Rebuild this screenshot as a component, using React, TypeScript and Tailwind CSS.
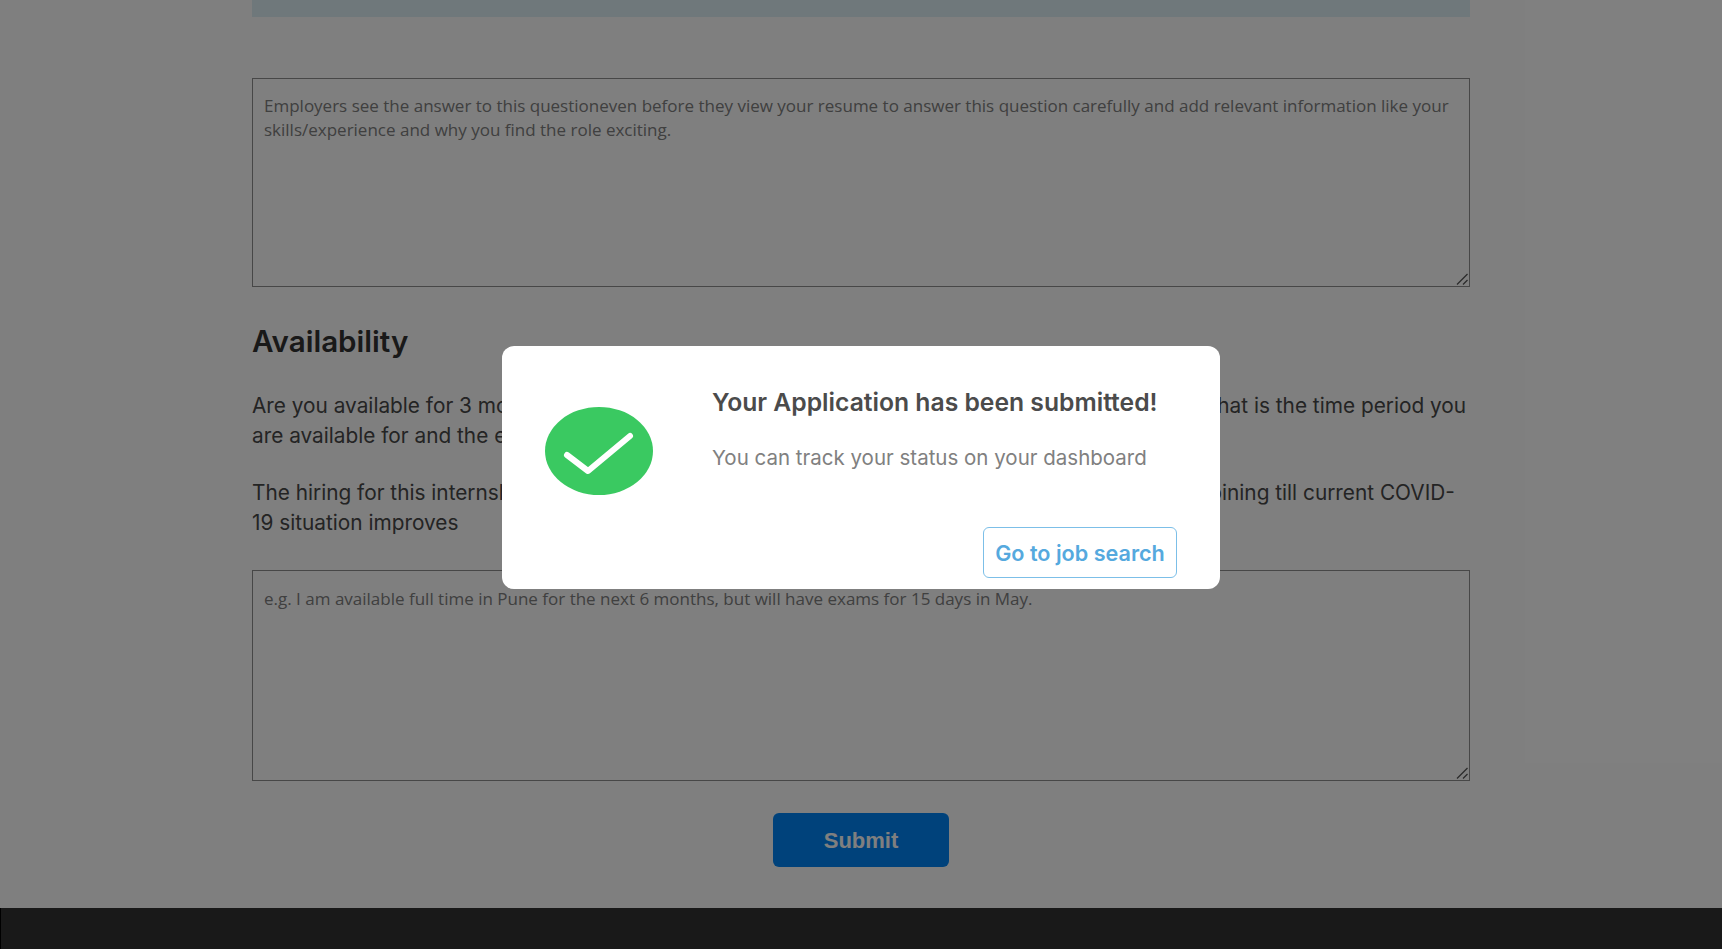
import React from 'react';

const Field: React.FC<{ placeholder: string; small?: boolean }> = ({ placeholder, small }) => (
  <div className={`relative w-full border border-[#8f8f8f] px-[11px] pt-[15px] text-[17px] leading-6 text-[#808080] ${small ? 'mt-[32px] h-[211px] pt-[16px]' : 'h-[209px]'}`} style={{ fontFamily: '"Open Sans", sans-serif' }}>
    {placeholder}
    {/* resize grip */}
    <svg className="absolute right-0 bottom-0" width="14" height="14" viewBox="0 0 14 14" fill="none" stroke="#555" strokeWidth="1.2">
      <path d="M2 12.5 12.5 2" />
      <path d="M8 12.5 12.5 8" />
    </svg>
  </div>
);

export default function App() {
  return (
    <div className="relative h-screen overflow-hidden bg-white flex flex-col font-['Inter',sans-serif] text-[#333]">
      <main className="flex-1 px-[252px]">
        <div className="h-[17px] bg-[#dff1f7] overflow-hidden" />
        <div className="mt-[61px]">
          <Field placeholder="Employers see the answer to this questioneven before they view your resume to answer this question carefully and add relevant information like your skills/experience and why you find the role exciting." />
        </div>

        <h2 className="mt-[34px] text-[29.6px] leading-[40px] font-semibold text-[#333]">Availability</h2>

        <p className="mt-[30px] text-[20.8px] leading-[30px] text-[#484848]">
          Are you available for 3 months, starting immediately, for a full-time internship from home? If not, what is the time period you are available for and the earliest date you can start this internship on?
        </p>
        <p className="mt-[27px] text-[20.8px] leading-[30px] text-[#484848]">
          The hiring for this internship will be done online, and the selected candidates will have a delayed joining till current COVID-19 situation improves
        </p>

        <Field small placeholder="e.g. I am available full time in Pune for the next 6 months, but will have exams for 15 days in May." />

        <div className="mt-[32px] flex justify-center">
          <button className="w-[176px] h-[54px] rounded-[6px] bg-[#0085f7] text-white text-[22px] font-bold font-['Liberation_Sans',sans-serif]">Submit</button>
        </div>
      </main>

      <footer className="h-[41px] bg-[#333] border-l border-black" />

      {/* dim layer with success dialog */}
      <div className="absolute inset-0 bg-black/50 flex justify-center pt-[346px]">
        <div className="w-[718px] h-[243px] bg-white rounded-[12px] flex flex-col pr-[43px]">
          <div className="flex flex-1">
            <div className="w-[210px] pt-[61px] pl-[43px] shrink-0">
              <svg width="108" height="88" viewBox="0 0 108 88">
                <ellipse cx="54" cy="44" rx="54" ry="44" fill="#3ac961" />
                <path d="M22 48 43 64 85 29" fill="none" stroke="#fff" strokeWidth="6" strokeLinecap="round" strokeLinejoin="round" />
              </svg>
            </div>
            <div className="pt-[38px]">
              <h3 className="text-[24.7px] leading-[36px] font-semibold text-[#4b4b4b] whitespace-nowrap">Your Application has been submitted!</h3>
              <p className="mt-[23px] text-[20.5px] leading-[30px] text-[#808080] whitespace-nowrap">You can track your status on your dashboard</p>
            </div>
          </div>
          <div className="flex justify-end pb-[11px]">
            <button className="w-[194px] h-[51px] rounded-[6px] border border-[#7cbfe8] pt-px text-[21.6px] font-semibold text-[#55a9de]">Go to job search</button>
          </div>
        </div>
      </div>
    </div>
  );
}
